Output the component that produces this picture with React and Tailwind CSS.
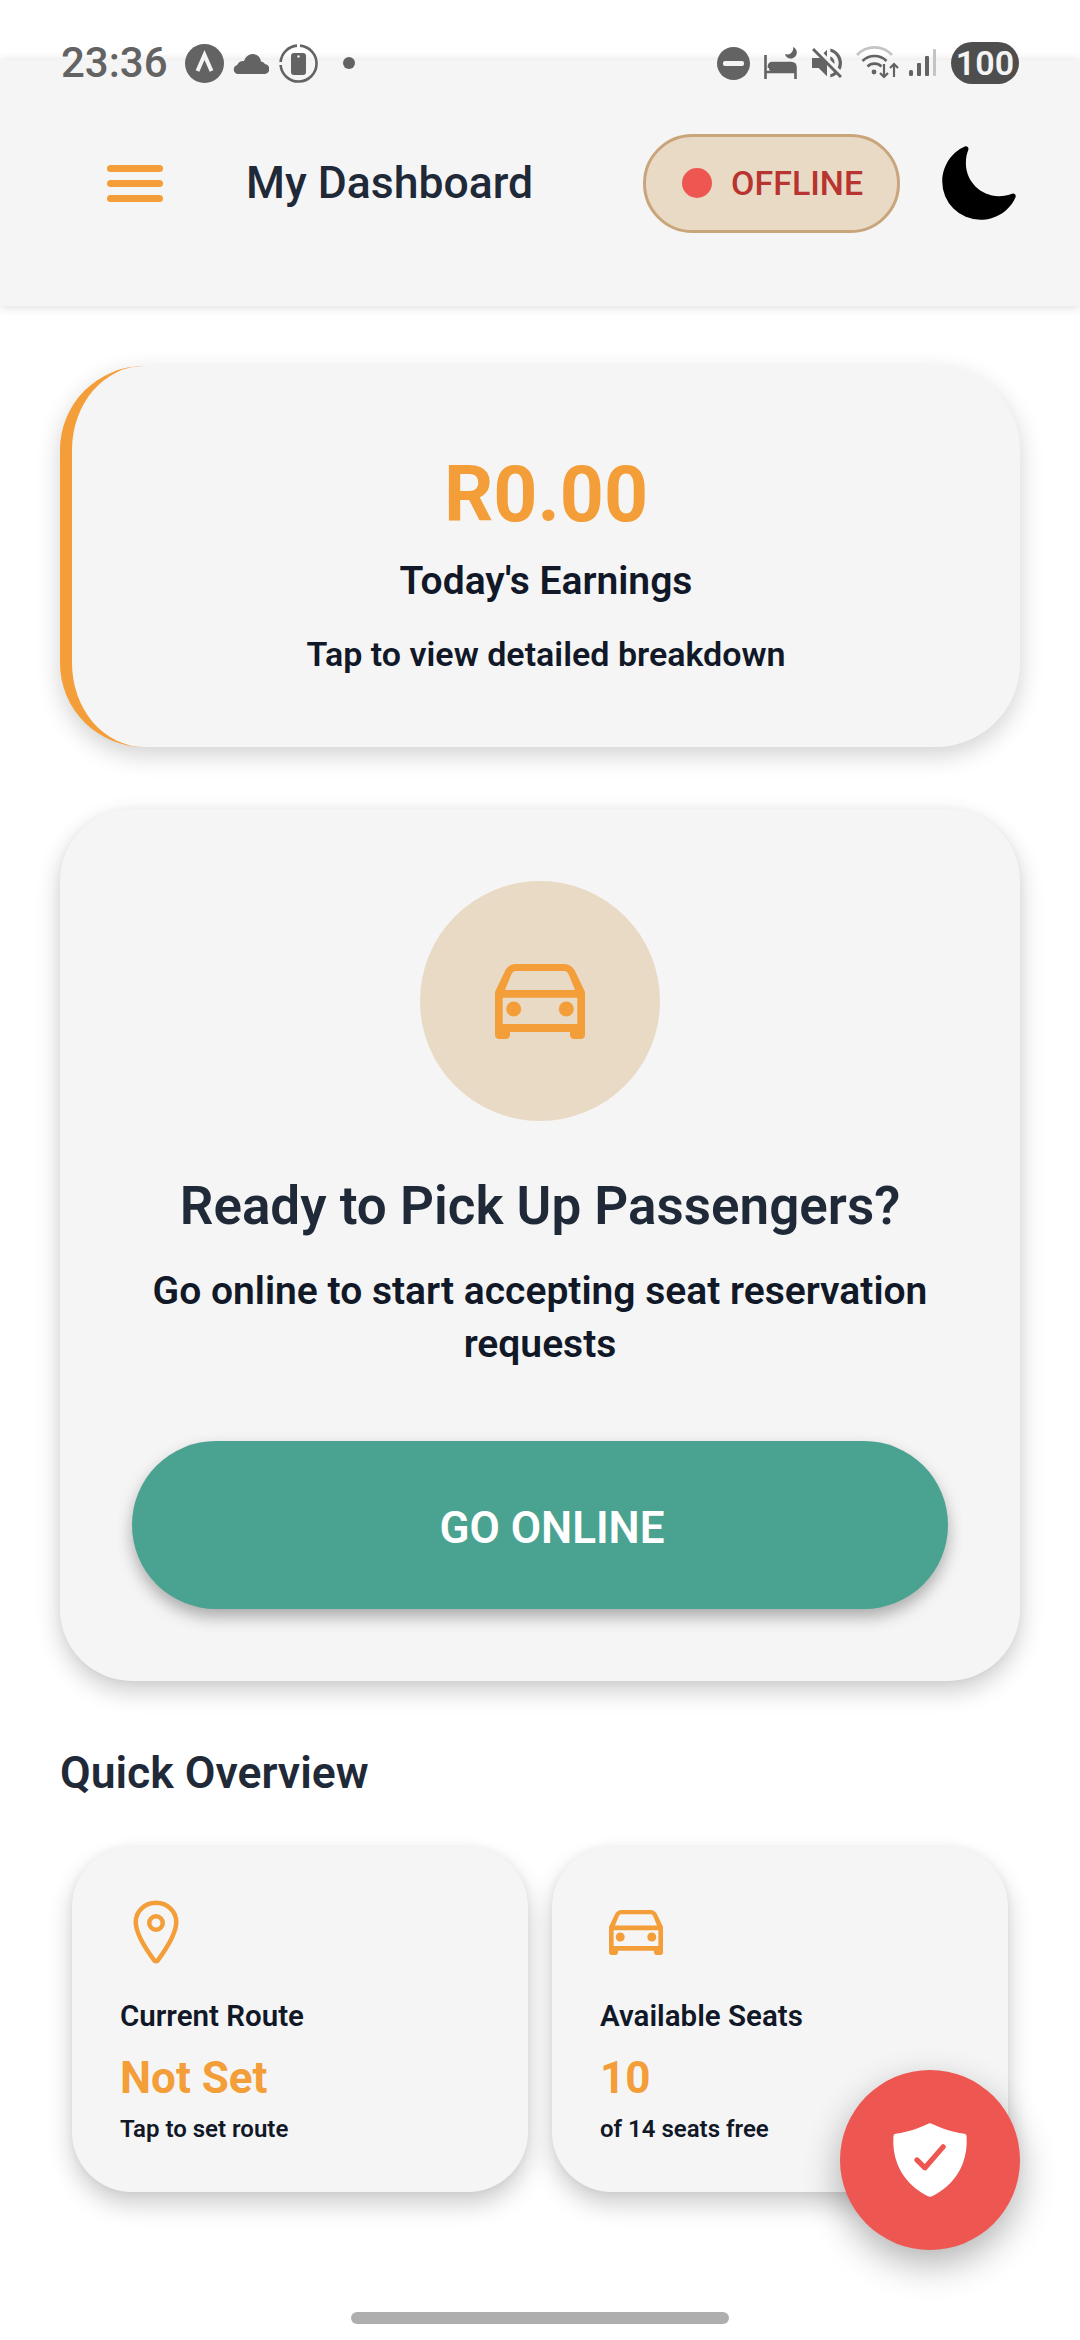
import { IoLocationOutline, IoMoon, IoShieldCheckmark } from 'react-icons/io5';
import { MdVolumeOff } from 'react-icons/md';

function CarIcon({ width }) {
  return (
    <svg width={width} height={(width * 75) / 90} viewBox="0 0 90 75">
      <path
        fillRule="evenodd"
        fill="#f39e38"
        d="M21 0H69C74 0 78 3 80 7L90 28V71C90 73.5 88 75 86 75H79C77 75 75 73 75 71V68H15V71C15 73 13 75 11 75H4C2 75 0 73.5 0 71V28L10 7C12 3 16 0 21 0ZM21 7C19 7 17.5 8 16.5 10L10 26H80L73.5 10C72.5 8 71 7 69 7ZM7.7 33.7V60H82.3V33.7Z"
      />
      <circle cx="18.7" cy="45" r="7.5" fill="#f39e38" />
      <circle cx="71.3" cy="45" r="7.5" fill="#f39e38" />
    </svg>
  );
}

function StatusBar() {
  return (
    <div className="absolute left-0 top-0 z-20 w-full h-[90px] text-[#636363]">
      <div className="absolute left-[61px] top-[42px] h-[42px] flex items-center">
        <span className="w-[108px] text-[42px] leading-[42px] font-medium">23:36</span>
        <svg className="ml-[16px]" width="39" height="39" viewBox="0 0 39 39">
          <circle cx="19.5" cy="19.5" r="19.5" fill="#636363" />
          <path d="M12.5 27 L19.5 11 L26.5 27" fill="none" stroke="#f4f4f4" strokeWidth="4" />
        </svg>
        <svg className="ml-[9px]" width="36" height="21" viewBox="0 0 36 21">
          <path d="M5 21a4.5 4.5 0 0 1-1-8.8A7 7 0 0 1 11 8 9 9 0 0 1 20 1a9 9 0 0 1 8 7.5 6 6 0 0 1 4 2.6A5 5 0 0 1 32 21z" fill="#636363" />
        </svg>
        <svg className="ml-[10px]" width="39" height="39" viewBox="0 0 39 39">
          <path d="M21 1.6A18 18 0 1 1 1.6 21M1.6 18A18 18 0 0 1 18 1.6" fill="none" stroke="#636363" strokeWidth="2.6" />
          <rect x="12" y="9" width="15" height="22" rx="3" fill="#636363" />
          <circle cx="19.5" cy="12.5" r="1.2" fill="#f4f4f4" />
        </svg>
        <span className="ml-[25px] w-[12px] h-[12px] rounded-full bg-[#636363]" />
      </div>

      <div className="absolute left-[717px] top-[42px] h-[42px] flex items-center">
        <svg width="33" height="33" viewBox="0 0 33 33">
          <circle cx="16.5" cy="16.5" r="16.5" fill="#636363" />
          <rect x="6" y="14" width="21" height="5" rx="2" fill="#f4f4f4" />
        </svg>
        <svg className="ml-[14px]" width="33" height="32" viewBox="0 0 33 32">
          <path d="M1.5 8v24M1.5 25h30M31.5 32V20a4 4 0 0 0-4-4H8a3 3 0 0 0-3 3v2" fill="none" stroke="#636363" strokeWidth="2.6" />
          <rect x="5" y="16" width="27" height="8" rx="2" fill="#636363" />
          <path d="M29 0a6 6 0 1 1-8 7 6 6 0 0 0 8-7z" fill="#636363" />
        </svg>
        <MdVolumeOff className="ml-[10px] -mr-[3px]" size={40} color="#636363" />
        <svg className="ml-[12px]" width="43" height="34" viewBox="0 0 43 34">
          <path d="M1 9a24 24 0 0 1 35 0" fill="none" stroke="#c4c4c4" strokeWidth="2.6" />
          <path d="M6.5 15a17 17 0 0 1 24 0M11.5 20.5a10 10 0 0 1 14 0" fill="none" stroke="#636363" strokeWidth="2.6" />
          <circle cx="18" cy="26" r="2.4" fill="#636363" />
          <path d="M28 18v13M24 27l4 4 4-4M38 31V18M34 22l4-4 4 4" fill="none" stroke="#636363" strokeWidth="2.2" />
        </svg>
        <svg className="ml-[10px]" width="27" height="30" viewBox="0 0 27 30">
          <rect x="0" y="22" width="4" height="6" rx="1.5" fill="#636363" />
          <rect x="8" y="15" width="4" height="13" rx="1" fill="#636363" />
          <rect x="16" y="8" width="4" height="20" rx="1" fill="#636363" />
          <rect x="24" y="1" width="3" height="27" rx="1" fill="#c4c4c4" />
        </svg>
        <span className="ml-[15px] w-[68px] h-[42px] rounded-full bg-[#4e4e4e] text-[#f4f4f4] text-[34px] leading-[42px] font-semibold text-center">100</span>
      </div>
    </div>
  );
}

function StatCard({ icon, label, value, sub }) {
  return (
    <div className="h-[345px] rounded-[60px] bg-[#f5f5f5] pl-[48px] pt-[49px] shadow-[0_12px_24px_rgba(0,0,0,0.2),0_0_8px_rgba(0,0,0,0.05)]">
      <div className="w-[72px] h-[72px] flex items-center justify-center">{icon}</div>
      <p className="mt-[30px] text-[29.5px] leading-[36px] font-semibold text-[#111827]">{label}</p>
      <p className="mt-[14px] text-[44px] leading-[60px] font-bold text-[#f39e38]">{value}</p>
      <p className="mt-[3px] text-[24px] leading-[36px] font-semibold text-[#111827]">{sub}</p>
    </div>
  );
}

export default function App() {
  return (
    <div className="relative w-[1080px] h-[2340px] overflow-hidden bg-white font-['Roboto',sans-serif]">
      <StatusBar />

      <header className="mt-[60px] h-[246px] bg-[#f5f5f5] flex items-center shadow-[0_1px_10px_rgba(0,0,0,0.15)]">
        <div className="ml-[107px] w-[56px] flex flex-col gap-[8px]">
          <span className="h-[7px] rounded-full bg-[#f39e38]" />
          <span className="h-[7px] rounded-full bg-[#f39e38]" />
          <span className="h-[7px] rounded-full bg-[#f39e38]" />
        </div>
        <h1 className="ml-[83px] w-[397px] text-[44.5px] font-medium text-[#1f2937]">My Dashboard</h1>
        <div className="w-[257px] h-[99px] rounded-full bg-[#e9dac6] border-[3px] border-[#c9a57c] flex items-center pl-[36px]">
          <span className="w-[30px] h-[30px] rounded-full bg-[#ee5651]" />
          <span className="ml-[19px] text-[34px] font-medium text-[#b83430]">OFFLINE</span>
        </div>
        <IoMoon className="ml-[37px]" size={84} color="#000" />
      </header>

      <main className="px-[60px]">
        <section className="mt-[60px] h-[381px] rounded-[84px] border-l-[12px] border-[#f39e38] bg-[#f5f5f5] flex flex-col items-center pt-[84px] shadow-[0_8px_24px_rgba(0,0,0,0.18)]">
          <p className="text-[77px] leading-[90px] font-bold text-[#f39e38]">R0.00</p>
          <p className="mt-[17px] text-[39px] leading-[48px] font-semibold text-[#111827]">Today's Earnings</p>
          <p className="mt-[28px] text-[34px] leading-[42px] font-semibold text-[#111827]">Tap to view detailed breakdown</p>
        </section>

        <section className="mt-[62px] h-[872px] rounded-[72px] bg-[#f5f5f5] px-[72px] pt-[72px] flex flex-col items-center shadow-[0_10px_24px_rgba(0,0,0,0.2),0_0_8px_rgba(0,0,0,0.04)]">
          <div className="w-[240px] h-[240px] rounded-full bg-[#e9dac6] flex items-center justify-center">
            <CarIcon width={90} />
          </div>
          <h2 className="mt-[54px] text-[53px] leading-[62px] font-semibold text-[#1f2937] text-center whitespace-nowrap">Ready to Pick Up Passengers?</h2>
          <p className="mt-[28px] text-[39px] leading-[53px] font-semibold text-[#111827] text-center">Go online to start accepting seat reservation requests</p>
          <button className="mt-[70px] w-full h-[168px] rounded-full bg-[#4aa391] pl-[24px] pt-[5px] text-white text-[44px] font-semibold shadow-[0_8px_16px_rgba(0,0,0,0.3)]">GO ONLINE</button>
        </section>

        <h2 className="mt-[67px] text-[44.5px] leading-[50px] font-semibold text-[#1f2937]">Quick Overview</h2>

        <div className="mt-[49px] mx-[12px] grid grid-cols-2 gap-[24px]">
          <StatCard
            icon={<IoLocationOutline size={72} color="#f39e38" />}
            label="Current Route"
            value="Not Set"
            sub="Tap to set route"
          />
          <StatCard
            icon={<CarIcon width={54} />}
            label="Available Seats"
            value="10"
            sub="of 14 seats free"
          />
        </div>
      </main>

      <button className="absolute left-[840px] top-[2070px] z-10 w-[180px] h-[180px] rounded-full bg-[#ee5651] flex items-center justify-center shadow-[0_14px_36px_rgba(0,0,0,0.3)]">
        <IoShieldCheckmark size={84} color="#fff" />
      </button>
      <div className="absolute left-[351px] top-[2312px] w-[378px] h-[12px] rounded-full bg-[#aeaeae]" />
    </div>
  );
}
